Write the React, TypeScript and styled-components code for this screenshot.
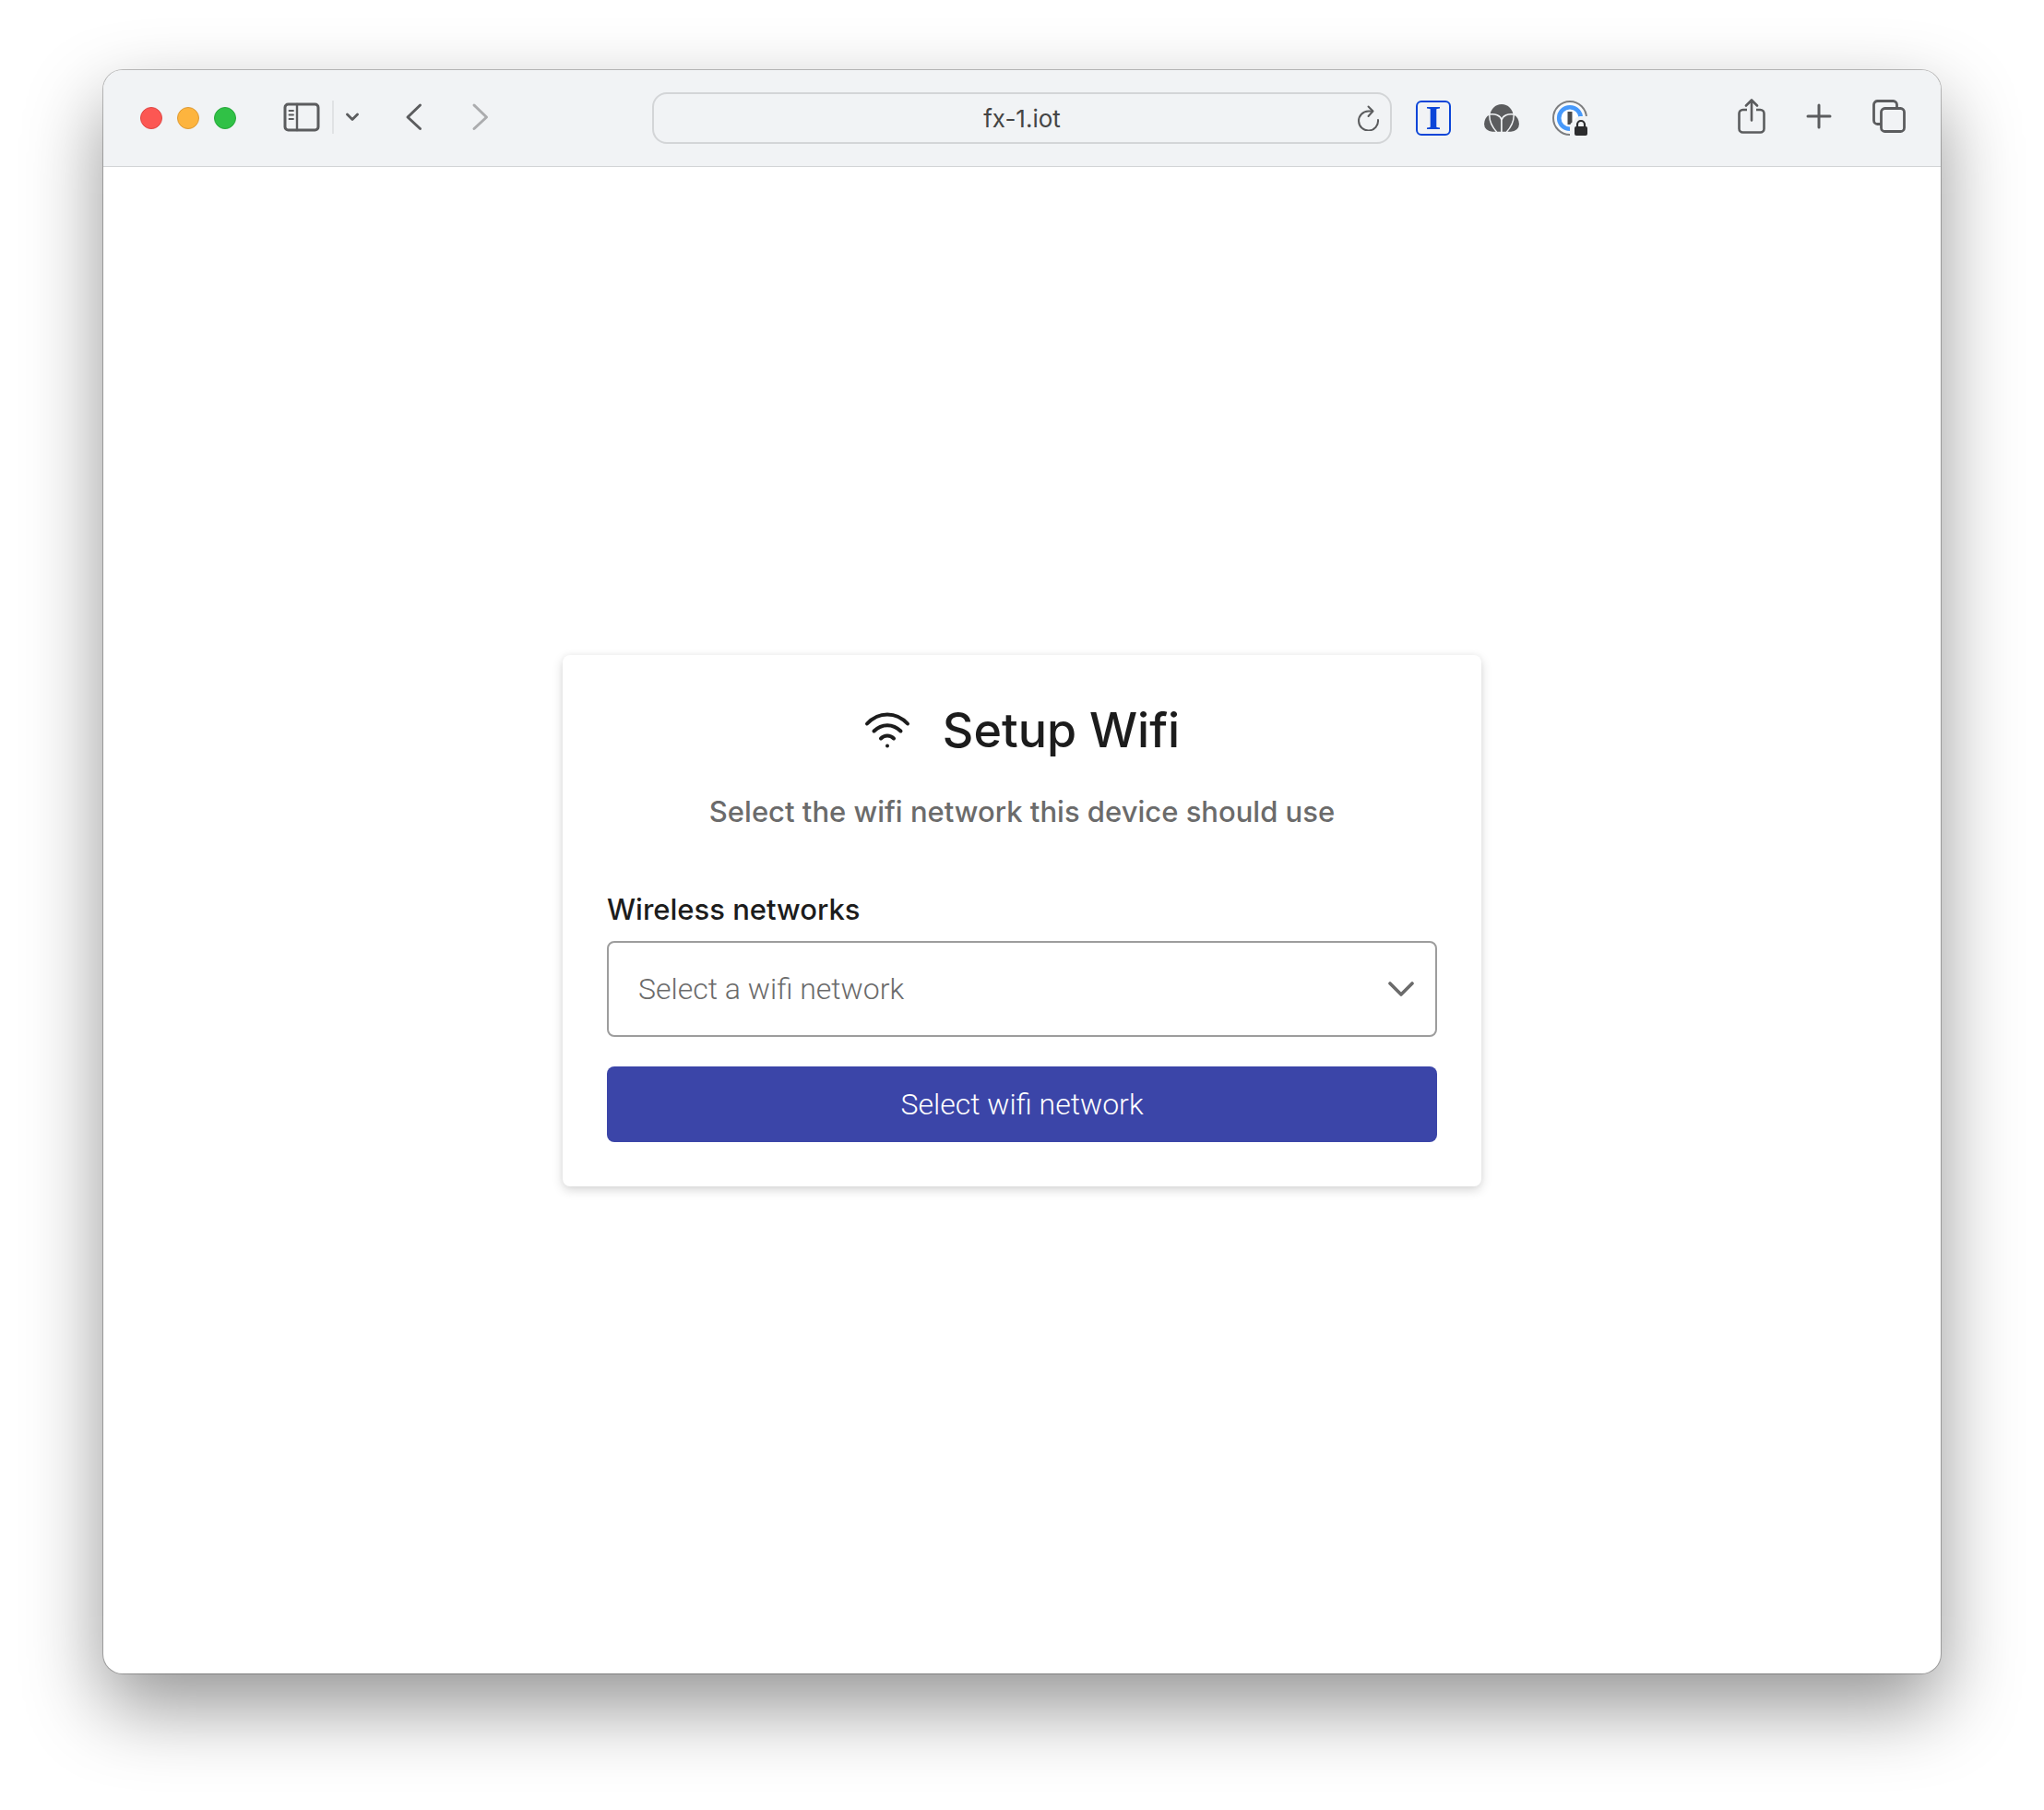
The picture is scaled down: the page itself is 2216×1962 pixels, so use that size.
import React from 'react';
import styled, { createGlobalStyle } from 'styled-components';

const GlobalStyle = createGlobalStyle`
  * { box-sizing: border-box; }
  body { margin: 0; background: #fff; font-family: Inter, "Liberation Sans", sans-serif; color: #1c1c1c; }
  button, select, input { font: inherit; color: inherit; }
`;

const Desktop = styled.div`
  min-height: 100vh;
  display: flex;
  padding: 76px 112px 148px;
`;

const Window = styled.div`
  flex: 1;
  display: flex;
  flex-direction: column;
  border-radius: 21px;
  background: #fff;
  box-shadow: 0 0 0 1px rgba(0, 0, 0, 0.24), 0 36px 84px rgba(0, 0, 0, 0.42);
  overflow: hidden;
`;

const Toolbar = styled.header`
  display: grid;
  grid-template-columns: 1fr minmax(0, 802px) 1fr;
  height: 105px;
  align-items: center;
  background: #f1f3f5;
  border-bottom: 1px solid #d2d4d6;
`;

const Side = styled.div<{ $end?: boolean }>`
  display: flex;
  align-items: center;
  justify-content: ${(p) => (p.$end ? 'space-between' : 'flex-start')};
  padding: ${(p) => (p.$end ? '0 38px 0 26px' : '0 0 0 40px')};
`;

const Group = styled.div<{ $gap: number }>`
  display: flex;
  align-items: center;
  gap: ${(p) => p.$gap}px;
`;

const Actions = styled(Group)`
  padding-bottom: 4px;
`;

const Light = styled.button<{ $fill: string; $edge: string }>`
  width: 24px;
  height: 24px;
  padding: 0;
  border-radius: 50%;
  border: 1px solid ${(p) => p.$edge};
  background: ${(p) => p.$fill};
`;

const Nav = styled.div`
  display: flex;
  align-items: center;
  margin-left: 51px;
  padding-bottom: 3px;
`;

const Divider = styled.span`
  width: 2px;
  height: 36px;
  margin: 0 13px;
  background: #e0e2e4;
`;

const IconButton = styled.button<{ $dim?: boolean }>`
  display: flex;
  padding: 0;
  border: 0;
  background: none;
  color: ${(p) => (p.$dim ? '#abacae' : '#5b5c5e')};
`;

const History = styled.div`
  display: flex;
  gap: 52px;
  margin-left: 50px;
  padding-bottom: 3px;
`;

const Address = styled.div`
  display: flex;
  align-items: center;
  height: 56px;
  padding: 0 11px;
  border: 2px solid #d3d5d7;
  border-radius: 16px;
`;

const AddressInput = styled.input`
  flex: 1;
  min-width: 0;
  padding: 0 0 0 24px;
  border: 0;
  outline: 0;
  background: none;
  text-align: center;
  font-size: 26px;
  color: #454545;
`;

const Page = styled.main`
  flex: 1;
  display: flex;
  align-items: center;
  justify-content: center;
`;

const Card = styled.form`
  width: 50%;
  min-width: 560px;
  padding: 48px;
  border-radius: 8px;
  background: #fff;
  box-shadow: 0 4px 12px rgba(0, 0, 0, 0.16), 0 0 6px rgba(0, 0, 0, 0.04);
`;

const Heading = styled.div`
  display: flex;
  align-items: center;
  justify-content: center;
  gap: 35px;
`;

const Title = styled.h1`
  margin: 0;
  font-size: 52px;
  line-height: 68px;
  font-weight: 500;
`;

const Lead = styled.p`
  margin: 30px 0 0;
  text-align: center;
  font-size: 31px;
  line-height: 48px;
  font-weight: 500;
  color: #6b6b6b;
`;

const Label = styled.label`
  display: block;
  margin-top: 56px;
  font-size: 31px;
  line-height: 52px;
  font-weight: 500;
`;

const SelectBox = styled.div`
  display: grid;
  align-items: center;
  margin-top: 8px;
  > * { grid-area: 1 / 1; }
  > svg { justify-self: end; margin-right: 24px; pointer-events: none; }
`;

const Select = styled.select`
  appearance: none;
  width: 100%;
  height: 104px;
  padding: 0 72px 0 32px;
  border: 2px solid #9d9d9d;
  border-radius: 8px;
  background: #fff;
  font-family: Roboto, "Liberation Sans", sans-serif;
  font-size: 32px;
  font-weight: 300;
  color: #6b6b6b;
`;

const Submit = styled.button`
  display: block;
  width: 100%;
  height: 82px;
  margin-top: 32px;
  border: 0;
  border-radius: 8px;
  background: #3b45a8;
  font-family: Roboto, "Liberation Sans", sans-serif;
  font-size: 32px;
  font-weight: 300;
  color: #fff;
`;

const stroke = { fill: 'none', stroke: 'currentColor', strokeLinecap: 'round', strokeLinejoin: 'round' } as const;

const SidebarIcon = () => (
  <svg width="40" height="32" viewBox="0 0 40 32" {...stroke}>
    <rect x="2" y="2" width="36" height="28" rx="3.5" strokeWidth="3" />
    <path d="M15 2v28" strokeWidth="2.4" />
    <path d="M6.500 9h4.500M6.500 13.500h4.500M6.500 18h4.500" strokeWidth="1.8" />
  </svg>
);

const SmallChevron = () => (
  <svg width="14" height="10" viewBox="0 0 14 10" {...stroke}>
    <path d="M1.500 2L7 7.500 12.500 2" strokeWidth="2.8" />
  </svg>
);

const BackIcon = () => (
  <svg width="20" height="32" viewBox="0 0 20 32" {...stroke}>
    <path d="M16.500 3L3 16l13.500 12.500" strokeWidth="3" />
  </svg>
);

const ForwardIcon = () => (
  <svg width="20" height="32" viewBox="0 0 20 32" {...stroke}>
    <path d="M3 3l13.500 13L3 28.500" strokeWidth="3" />
  </svg>
);

const ReloadIcon = () => (
  <svg width="24" height="28" viewBox="0 0 24 28" {...stroke} strokeWidth="2">
    <path d="M22 16a10.500 10.500 0 1 1-10.500-9.500h4.500" />
    <path d="M11.500 1.500l5 5-5 5.500" />
  </svg>
);

const InstapaperIcon = () => (
  <svg width="38" height="38" viewBox="0 0 38 38">
    <rect x="1" y="1" width="36" height="36" rx="5" fill="none" stroke="#0b45d8" strokeWidth="2" />
    <path d="M12 7h14v1.500l-3.200.6c-.4.100-.5.400-.5 1v17.800c0 .600.100.900.5 1l3.200.6V31H12v-1.500l3.200-.6c.4-.100.500-.400.500-1V10.100c0-.600-.1-.900-.5-1L12 8.500z" fill="#0b45d8" />
  </svg>
);

const LobesIcon = () => (
  <svg width="38" height="32" viewBox="0 0 38 32">
    <circle cx="19" cy="13.500" r="12.500" fill="#5b5c5e" />
    <g fill="#5b5c5e" stroke="#f1f3f5" strokeWidth="1.500">
      <path d="M19 31.500H9C3.500 31.500-.7 27.500-.7 22.500c0-5 2.700-9.500 6-10.500 8 0 13.700 6 13.700 19.500z" />
      <path d="M19 31.500H29c5.500 0 9.700-4 9.700-9 0-5-2.700-9.500-6-10.500-8 0-13.700 6-13.700 19.500z" />
      <path d="M5.800 12c6-1 12 1 13.200 6V31.500h-5C9 26 5.500 19 5.800 12z" />
      <path d="M32.200 12c-6-1-12 1-13.200 6V31.500h5C29 26 32.500 19 32.200 12z" />
    </g>
  </svg>
);

const PasswordIcon = () => (
  <svg width="38" height="38" viewBox="0 0 38 38">
    <circle cx="19" cy="19" r="18" fill="#f8f9fa" stroke="#7d7e80" strokeWidth="2" />
    <circle cx="19" cy="19" r="11.800" fill="#fff" stroke="#4799fb" strokeWidth="4.600" />
    <rect x="16.500" y="12" width="5" height="14" fill="#4a4a4c" />
    <path d="M19 38V28q0-4 4-5 2-6 7-6h8v21z" fill="#f1f3f5" />
    <rect x="24" y="28" width="14" height="10" rx="2" fill="#2c2c2e" />
    <path d="M27 29v-3a4 4 0 0 1 8 0v3" fill="none" stroke="#2c2c2e" strokeWidth="2.200" />
  </svg>
);

const ShareIcon = () => (
  <svg width="30" height="38" viewBox="0 0 30 38" {...stroke} strokeWidth="2.600">
    <path d="M10 12H5.500a4 4 0 0 0-4 4v16.500a4 4 0 0 0 4 4h19a4 4 0 0 0 4-4V16a4 4 0 0 0-4-4H20" strokeLinecap="butt" />
    <path d="M15 23.500V2M9 7.500l6-6 6 6" />
  </svg>
);

const PlusIcon = () => (
  <svg width="28" height="28" viewBox="0 0 28 28" {...stroke} strokeWidth="3">
    <path d="M14 2v24M2 14h24" />
  </svg>
);

const TabsIcon = () => (
  <svg width="36" height="36" viewBox="0 0 36 36" {...stroke} strokeWidth="2.800">
    <path d="M26.500 9V5.500a4 4 0 0 0-4-4h-17a4 4 0 0 0-4 4v17a4 4 0 0 0 4 4H9" strokeLinecap="butt" />
    <rect x="9.500" y="9.500" width="25" height="25" rx="4" />
  </svg>
);

const WifiIcon = () => (
  <svg width="50" height="40" viewBox="0 0 50 40" {...stroke} strokeWidth="4">
    <path d="M3 12.500C15.500-1 34.500-1 47 12.500" />
    <path d="M10.500 20.500c8.500-8.500 20.500-8.500 29 0" />
    <path d="M18 28.500c4-4 10-4 14 0" />
    <circle cx="25" cy="36.500" r="2" fill="currentColor" stroke="none" />
  </svg>
);

const SelectChevron = () => (
  <svg width="30" height="20" viewBox="0 0 30 20" {...stroke} color="#6b6b6b">
    <path d="M3 4l12 12L27 4" strokeWidth="3.600" />
  </svg>
);

export default function App() {
  return (
    <>
      <GlobalStyle />
      <Desktop>
        <Window>
          <Toolbar>
            <Side>
              <Group $gap={16}>
                <Light aria-label="Close" $fill="#fc5753" $edge="#df4744" />
                <Light aria-label="Minimize" $fill="#fdb43e" $edge="#de9a34" />
                <Light aria-label="Zoom" $fill="#30c146" $edge="#27a73a" />
              </Group>
              <Nav>
                <IconButton aria-label="Sidebar"><SidebarIcon /></IconButton>
                <Divider />
                <IconButton aria-label="Tab groups"><SmallChevron /></IconButton>
              </Nav>
              <History>
                <IconButton aria-label="Back"><BackIcon /></IconButton>
                <IconButton aria-label="Forward" $dim><ForwardIcon /></IconButton>
              </History>
            </Side>
            <Address>
              <AddressInput aria-label="Address" defaultValue="fx-1.iot" />
              <IconButton aria-label="Reload"><ReloadIcon /></IconButton>
            </Address>
            <Side $end>
              <Group $gap={36}>
                <IconButton aria-label="Save to Instapaper"><InstapaperIcon /></IconButton>
                <IconButton aria-label="Extension"><LobesIcon /></IconButton>
                <IconButton aria-label="Passwords"><PasswordIcon /></IconButton>
              </Group>
              <Actions $gap={44}>
                <IconButton aria-label="Share"><ShareIcon /></IconButton>
                <IconButton aria-label="New tab"><PlusIcon /></IconButton>
                <IconButton aria-label="Show tabs"><TabsIcon /></IconButton>
              </Actions>
            </Side>
          </Toolbar>
          <Page>
            <Card onSubmit={(e) => e.preventDefault()}>
              <Heading>
                <WifiIcon />
                <Title>Setup Wifi</Title>
              </Heading>
              <Lead>Select the wifi network this device should use</Lead>
              <Label htmlFor="network">Wireless networks</Label>
              <SelectBox>
                <Select id="network" defaultValue="">
                  <option value="">Select a wifi network</option>
                </Select>
                <SelectChevron />
              </SelectBox>
              <Submit type="submit">Select wifi network</Submit>
            </Card>
          </Page>
        </Window>
      </Desktop>
    </>
  );
}
